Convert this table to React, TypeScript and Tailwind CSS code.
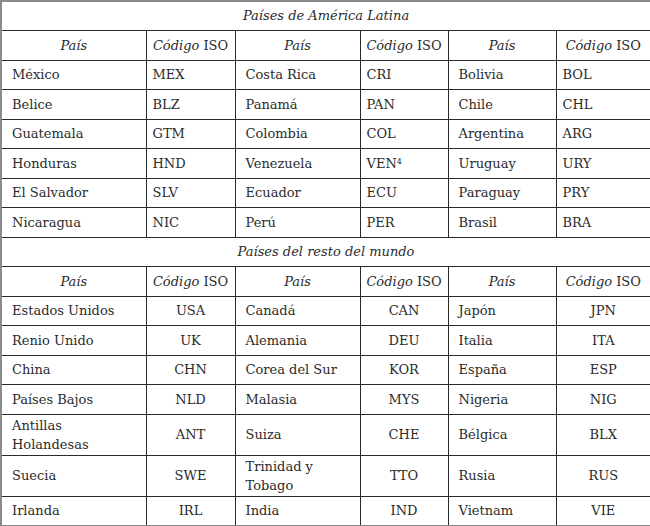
import React from 'react';

type Row = [string, string, string, string, string, string];

const latam: Row[] = [
  ['México', 'MEX', 'Costa Rica', 'CRI', 'Bolivia', 'BOL'],
  ['Belice', 'BLZ', 'Panamá', 'PAN', 'Chile', 'CHL'],
  ['Guatemala', 'GTM', 'Colombia', 'COL', 'Argentina', 'ARG'],
  ['Honduras', 'HND', 'Venezuela', 'VEN', 'Uruguay', 'URY'],
  ['El Salvador', 'SLV', 'Ecuador', 'ECU', 'Paraguay', 'PRY'],
  ['Nicaragua', 'NIC', 'Perú', 'PER', 'Brasil', 'BRA'],
];

const mundo: { row: Row; tall?: boolean }[] = [
  { row: ['Estados Unidos', 'USA', 'Canadá', 'CAN', 'Japón', 'JPN'] },
  { row: ['Renio Unido', 'UK', 'Alemania', 'DEU', 'Italia', 'ITA'] },
  { row: ['China', 'CHN', 'Corea del Sur', 'KOR', 'España', 'ESP'] },
  { row: ['Países Bajos', 'NLD', 'Malasia', 'MYS', 'Nigeria', 'NIG'] },
  { row: ['Antillas Holandesas', 'ANT', 'Suiza', 'CHE', 'Bélgica', 'BLX'], tall: true },
  { row: ['Suecia', 'SWE', 'Trinidad y Tobago', 'TTO', 'Rusia', 'RUS'], tall: true },
  { row: ['Irlanda', 'IRL', 'India', 'IND', 'Vietnam', 'VIE'] },
];

const cell = 'border border-[#2a2a2a] align-middle leading-[19px]';

function Title({ text }: { text: string }) {
  return (
    <tr className="h-[29px]">
      <td colSpan={6} className={`${cell} text-center italic text-[13px]`}>
        {text}
      </td>
    </tr>
  );
}

function Header() {
  const pais = <span className="italic">País</span>;
  const iso = (
    <span>
      <span className="italic">Código</span> ISO
    </span>
  );
  return (
    <tr className="h-[30px]">
      {[pais, iso, pais, iso, pais, iso].map((c, i) => (
        <td key={i} className={`${cell} text-center`}>
          {c}
        </td>
      ))}
    </tr>
  );
}

export default function App() {
  return (
    <div className="w-[650px] h-[526px] bg-white text-[#2b2b2b] text-[13px]" style={{ fontFamily: '"DejaVu Serif", "Liberation Serif", serif' }}>
      <table className="w-[650px] border-collapse border-2 border-[#8a8a8a] table-fixed">
        <colgroup>
          <col className="w-[145px]" />
          <col className="w-[89px]" />
          <col className="w-[125px]" />
          <col className="w-[88px]" />
          <col className="w-[108px]" />
          <col className="w-[95px]" />
        </colgroup>
        <tbody>
          <Title text="Países de América Latina" />
          <Header />
          {latam.map((r) => (
            <tr key={r[0]} className="h-[29.5px]">
              {r.map((c, i) => (
                <td key={i} className={`${cell} ${i % 2 === 0 ? 'pl-[10px]' : 'pl-[6px]'}`}>
                  {c}
                  {c === 'VEN' && <sup className="text-[8px]">4</sup>}
                </td>
              ))}
            </tr>
          ))}
          <Title text="Países del resto del mundo" />
          <Header />
          {mundo.map(({ row, tall }) => (
            <tr key={row[0]} className={tall ? 'h-[41px]' : 'h-[29.5px]'}>
              {row.map((c, i) => (
                <td key={i} className={`${cell} ${i % 2 === 0 ? 'pl-[10px] pr-[6px]' : 'text-center'}`}>
                  {c}
                </td>
              ))}
            </tr>
          ))}
        </tbody>
      </table>
    </div>
  );
}
